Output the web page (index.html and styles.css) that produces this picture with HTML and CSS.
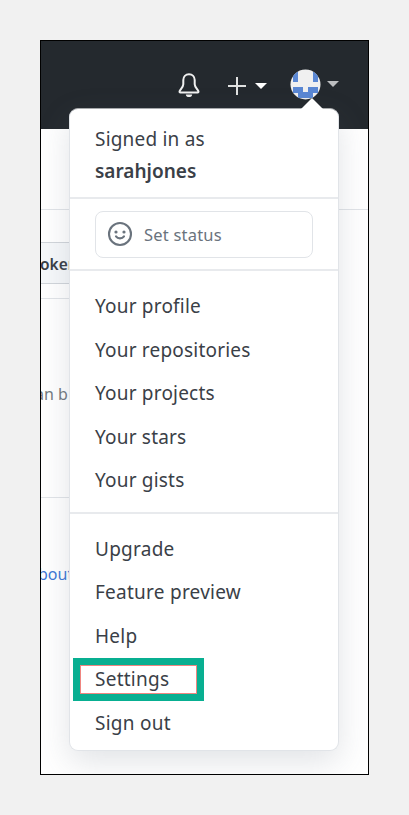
FILE: index.html
```html
<!DOCTYPE html>
<html lang="en">
<head>
<meta charset="utf-8">
<title>Account menu</title>
<link rel="stylesheet" href="styles.css">
</head>
<body>
<main class="frame">
  <header class="topbar">
    <svg class="bell" width="24" height="27" viewBox="0 0 24 27" fill="none">
      <path d="M12 2.200C8.600 2.200 6.300 4.600 6.300 8V12.200C6.300 15.500 2.500 18 2.500 19.700C2.500 20.200 2.800 20.400 3.300 20.400H20.700C21.200 20.400 21.500 20.200 21.500 19.700C21.500 18 17.700 15.500 17.700 12.200V8C17.700 4.600 15.400 2.200 12 2.200Z" stroke="#f0f0f0" stroke-width="2"/>
      <path d="M8.800 22.400H15.200C15 24.200 13.800 25 12 25S9 24.200 8.800 22.400Z" fill="#f0f0f0"/>
    </svg>
    <svg class="plus" width="18" height="18" viewBox="0 0 18 18"><path d="M9 0V18M0 9H18" stroke="#e0e1e1" stroke-width="2"/></svg>
    <svg class="caret" width="12" height="6" viewBox="0 0 12 6"><path d="M0 0H12L6 6Z" fill="#fff"/></svg>
    <svg class="avatar" width="31" height="31" viewBox="0 0 31 31">
      <defs><clipPath id="round"><circle cx="15.500" cy="15.500" r="15"/></clipPath></defs>
      <g clip-path="url(#round)">
        <path d="M0 0H31V31H0Z" fill="#f0f0f0"/>
        <path d="M3 3H8V13H3ZM23 3H28V13H23ZM3 18H13V23H18V18H28V24H23V29H8V24H3Z" fill="#5a87d3"/>
      </g>
    </svg>
    <svg class="caret last" width="12" height="6" viewBox="0 0 12 6"><path d="M0 0H12L6 6Z" fill="#bcbec0"/></svg>
  </header>
  <section class="page">
    <div class="band tabs"></div>
    <div class="column">
      <div class="gap"></div>
      <div class="token">oken</div>
      <div class="band space"></div>
      <div class="band note">an b</div>
      <div class="link">bout</div>
    </div>
  </section>
  <nav class="menu">
    <div class="who">Signed in as<br><b>sarahjones</b></div>
    <div class="status-row">
      <div class="status">
        <svg width="26" height="26" viewBox="0 0 26 26" fill="none" stroke="#6a737d" stroke-width="2.100">
          <circle cx="13" cy="13" r="11"/>
          <path d="M9 15.300C10.800 18 15.200 18 17 15.300" stroke-linecap="round"/>
          <circle cx="9" cy="11" r="1.600" fill="#6a737d" stroke="none"/>
          <circle cx="17" cy="11" r="1.600" fill="#6a737d" stroke="none"/>
        </svg>
        <span>Set status</span>
      </div>
    </div>
    <div class="group">
      <a>Your profile</a>
      <a>Your repositories</a>
      <a>Your projects</a>
      <a>Your stars</a>
      <a>Your gists</a>
    </div>
    <div class="group second">
      <a>Upgrade</a>
      <a>Feature preview</a>
      <a>Help</a>
      <a class="marked">Settings</a>
      <a>Sign out</a>
    </div>
  </nav>
</main>
</body>
</html>
```
FILE: styles.css
```css
*, *::before, *::after { box-sizing: border-box; }
body {
  margin: 0;
  padding: 40px;
  height: 815px;
  background: #f1f1f1;
  font-family: "Noto Sans", sans-serif;
  color: #3a4047;
}
.frame {
  position: relative;
  width: 329px;
  height: 735px;
  border: 1px solid #000;
  background: #fff;
  overflow: hidden;
}
.topbar {
  display: flex;
  align-items: center;
  height: 88px;
  padding: 2px 29px 0 136px;
  background: #24292e;
}
.topbar svg { flex: none; display: block; }
.bell { margin-top: -1px; }
.plus { margin-left: 27px; }
.caret { margin-left: 9px; }
.avatar { margin-left: 23px; margin-top: -3px; }
.caret.last { margin-left: 6px; margin-top: -4px; }
.column { width: 40px; }
.band { border-bottom: 1px solid #e1e4e8; }
.tabs { height: 81px; }
.gap { height: 32px; }
.token {
  height: 42px;
  border: solid #d1d5da;
  border-width: 1px 0;
  background: #f6f8fa;
  font-size: 15.5px;
  font-weight: 600;
  line-height: 43px;
  text-indent: -1px;
}
.space { height: 15px; }
.note {
  height: 199px;
  padding-top: 81px;
  font-size: 16px;
  line-height: 28px;
  color: #737a82;
  text-indent: -6px;
  white-space: nowrap;
}
.link {
  padding-top: 62px;
  font-size: 16px;
  line-height: 28px;
  color: #3d78d6;
  text-indent: -3px;
}
.menu {
  position: absolute;
  left: 28px;
  top: 67px;
  width: 270px;
  height: 643px;
  border: 1.5px solid #e1e4e8;
  border-top-color: #a6a9ab;
  border-radius: 9px;
  background: #fff;
  box-shadow: 0 11px 32px rgba(90, 100, 115, .18);
  font-size: 19px;
  letter-spacing: .2px;
}
.menu::before {
  content: "";
  position: absolute;
  left: 231px;
  top: -11px;
  border: solid transparent;
  border-width: 0 11px 11px;
  border-bottom-color: #fff;
}
.who {
  height: 88px;
  padding: 14px 25px 0;
  line-height: 32px;
}
.who b { font-weight: 600; letter-spacing: 0; }
.status-row {
  height: 72px;
  border-top: 2px solid #e8eaed;
  padding: 12px 25px;
}
.status {
  display: flex;
  align-items: center;
  gap: 11px;
  height: 47px;
  padding: 0 11px 2px;
  border: 1.5px solid #e1e4e8;
  border-radius: 8px;
  color: #6a737d;
  font-size: 16.5px;
}
.status span { padding-top: 1px; }
.group {
  height: 243px;
  border-top: 2px solid #e8eaed;
  padding-top: 14px;
}
.group.second { padding-top: 13.5px; }
.group a {
  position: relative;
  display: block;
  height: 43.6px;
  padding-left: 25px;
  line-height: 43.6px;
}
.group.second a { letter-spacing: .25px; }
.marked::after {
  content: "";
  position: absolute;
  left: 3px;
  top: 0;
  width: 131px;
  height: 43px;
  border: 7px solid #08af91;
  outline: 1px solid #ef8580;
  outline-offset: -8px;
}
```
